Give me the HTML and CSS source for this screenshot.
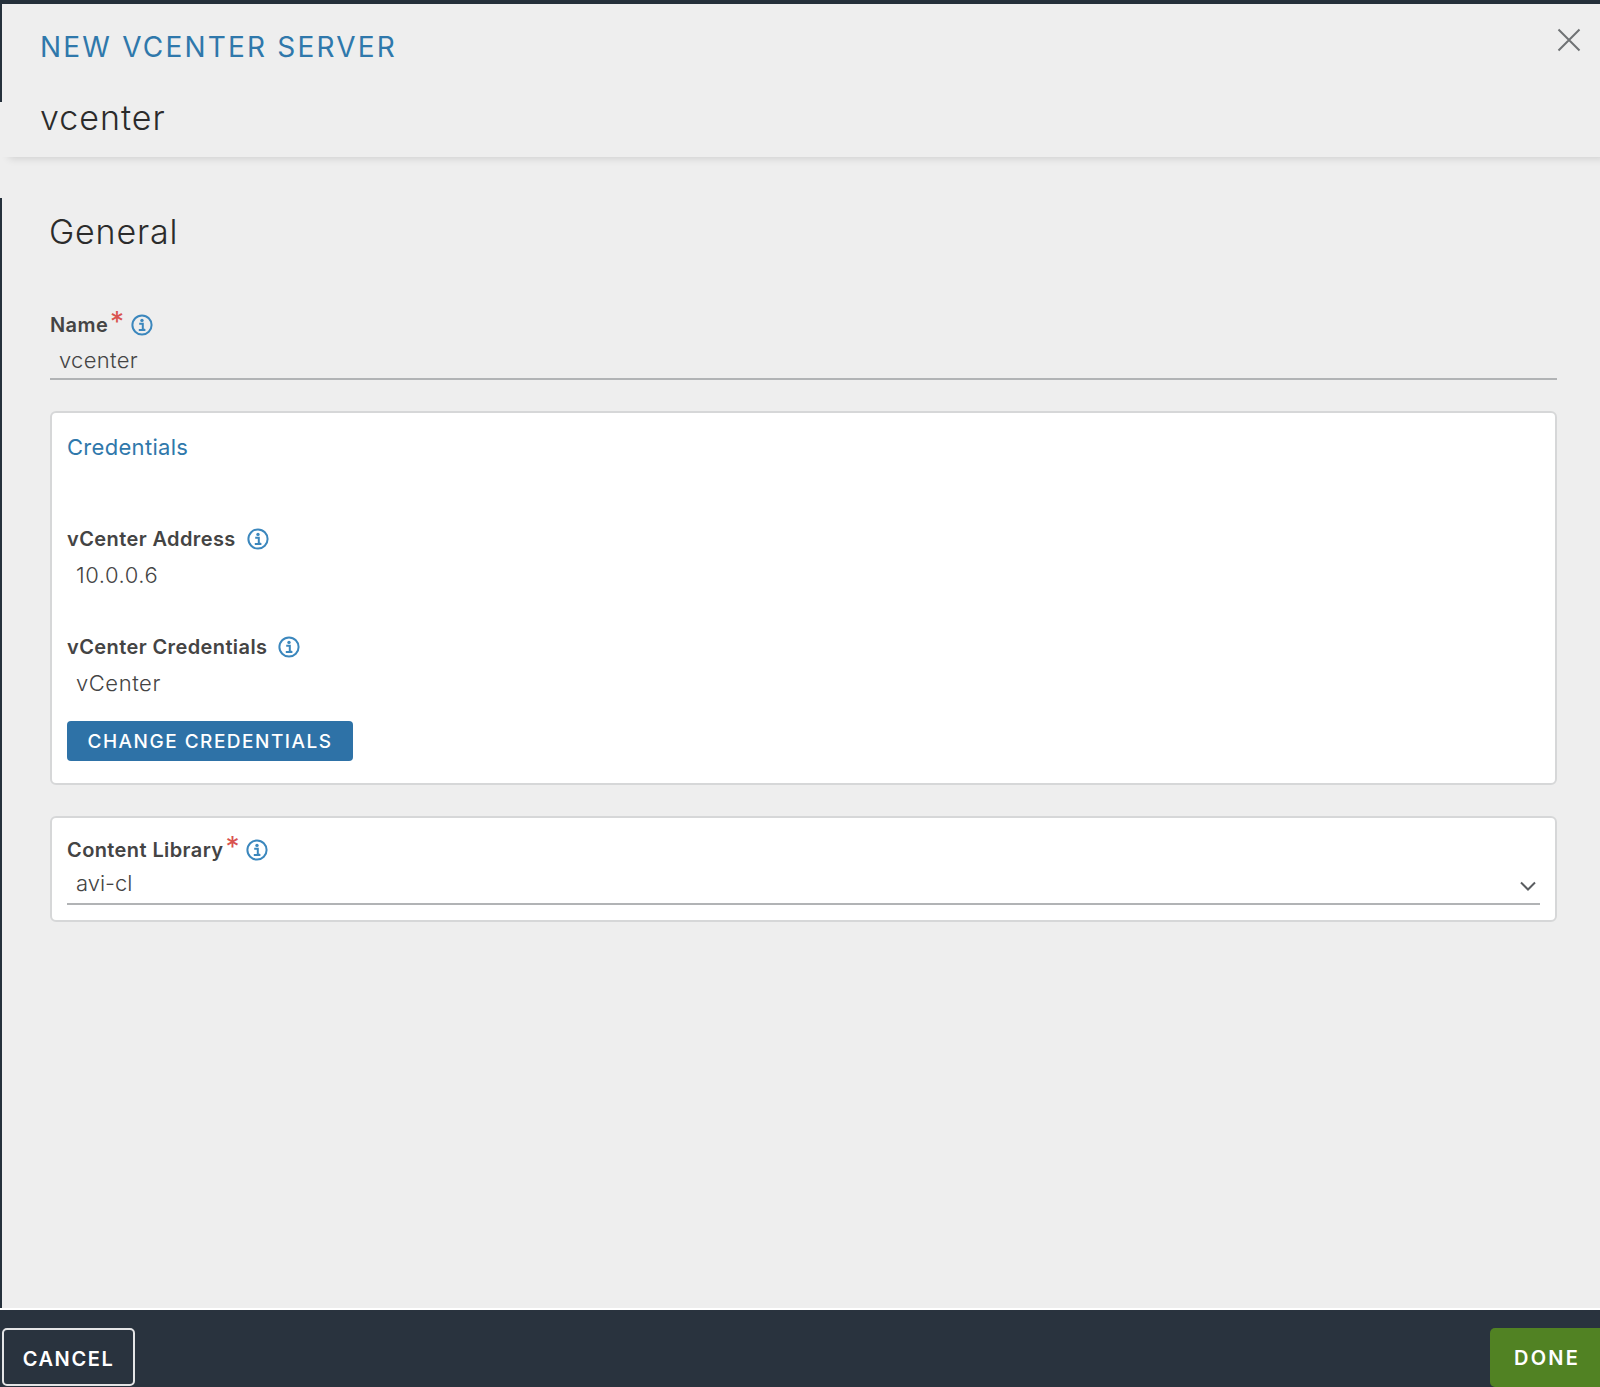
FILE: index.html
```html
<!DOCTYPE html>
<html lang="en">
<head>
<meta charset="utf-8">
<title>New vCenter Server</title>
<link rel="stylesheet" href="styles.css">
</head>
<body>
<div class="topbar"></div>
<header class="header">
  <div class="header-accent"></div>
  <div class="header-text">
    <h1 class="title">NEW VCENTER SERVER</h1>
    <div class="subtitle">vcenter</div>
  </div>
  <button class="close" aria-label="Close">
    <svg width="24" height="24" viewBox="0 0 24 24"><path d="M1.5 1.5 L22.5 22.5 M22.5 1.5 L1.5 22.5" stroke="#6f7274" stroke-width="2" fill="none"/></svg>
  </button>
</header>
<main class="main">
  <h2 class="section">General</h2>
  <div class="field">
    <div class="label">Name<span class="req">*</span>
      <svg class="info" viewBox="0 0 22 22"><circle cx="11" cy="11" r="9.6" fill="none" stroke="#3b87bd" stroke-width="2"/><circle cx="11" cy="6.4" r="1.7" fill="#3b87bd"/><path d="M8.2 9.8h3.6v6h2.2M7.8 15.9h6.6" fill="none" stroke="#3b87bd" stroke-width="2"/></svg>
    </div>
    <div class="input">vcenter</div>
  </div>
  <section class="card card-cred">
    <div class="card-title">Credentials</div>
    <div class="label">vCenter Address
      <svg class="info wide" viewBox="0 0 22 22"><circle cx="11" cy="11" r="9.6" fill="none" stroke="#3b87bd" stroke-width="2"/><circle cx="11" cy="6.4" r="1.7" fill="#3b87bd"/><path d="M8.2 9.8h3.6v6h2.2M7.8 15.9h6.6" fill="none" stroke="#3b87bd" stroke-width="2"/></svg>
    </div>
    <div class="value">10.0.0.6</div>
    <div class="label label-second">vCenter Credentials
      <svg class="info wide" viewBox="0 0 22 22"><circle cx="11" cy="11" r="9.6" fill="none" stroke="#3b87bd" stroke-width="2"/><circle cx="11" cy="6.4" r="1.7" fill="#3b87bd"/><path d="M8.2 9.8h3.6v6h2.2M7.8 15.9h6.6" fill="none" stroke="#3b87bd" stroke-width="2"/></svg>
    </div>
    <div class="value">vCenter</div>
    <button class="btn-primary">CHANGE CREDENTIALS</button>
  </section>
  <section class="card card-lib">
    <div class="label">Content Library<span class="req">*</span>
      <svg class="info" viewBox="0 0 22 22"><circle cx="11" cy="11" r="9.6" fill="none" stroke="#3b87bd" stroke-width="2"/><circle cx="11" cy="6.4" r="1.7" fill="#3b87bd"/><path d="M8.2 9.8h3.6v6h2.2M7.8 15.9h6.6" fill="none" stroke="#3b87bd" stroke-width="2"/></svg>
    </div>
    <div class="select">
      <span>avi-cl</span>
      <svg class="chev" width="16" height="10" viewBox="0 0 16 10"><path d="M1 1.5 L8 8.5 L15 1.5" fill="none" stroke="#5a5d60" stroke-width="2"/></svg>
    </div>
  </section>
</main>
<footer class="footer">
  <button class="btn-cancel">CANCEL</button>
  <button class="btn-done">DONE</button>
</footer>
</body>
</html>
```

FILE: styles.css
```css
* { box-sizing: border-box; }
html, body { height: 100%; }
body {
  margin: 0;
  height: 1387px;
  overflow: hidden;
  display: flex;
  flex-direction: column;
  background: #eeeeee;
  font-family: "Inter", "Liberation Sans", sans-serif;
  color: #333;
}
.topbar { height: 4px; background: #25303b; flex: none; }
.header {
  flex: none;
  height: 153px;
  display: flex;
  justify-content: space-between;
  position: relative;
  background: #eeeeee;
  box-shadow: 7px 3px 8px -2px rgba(0,0,0,.15);
}
.header-accent {
  position: absolute; left: 0; top: 0;
  width: 2px; height: 98px; background: #25303b;
}
.header-text { padding: 27px 0 0 40px; }
.title {
  margin: 0;
  font-size: 28px;
  line-height: 32px;
  font-weight: 400;
  letter-spacing: 2.2px;
  color: #2f78ab;
}
.subtitle {
  margin-top: 38px;
  font-size: 34px;
  line-height: 34px;
  font-weight: 300;
  letter-spacing: 1px;
  color: #2b2b2b;
}
.close {
  background: none; border: 0; padding: 0;
  margin: 24px 19px 0 0;
  width: 24px; height: 24px;
  display: block;
}
.close svg { display: block; }
.main {
  flex: 1;
  min-height: 0;
  margin-top: 41px;
  padding: 14px 43px 0 48px;
  border-left: 2px solid #25303b;
}
.section {
  margin: 0 0 0 -1px;
  font-size: 34px;
  line-height: 40px;
  font-weight: 300;
  letter-spacing: .8px;
  color: #2b2b2b;
}
.field { margin-top: 61px; }
.label {
  display: flex;
  align-items: center;
  height: 24px;
  font-size: 20px;
  font-weight: 600;
  letter-spacing: .4px;
  color: #444;
  white-space: nowrap;
}
.req {
  color: #d9534f;
  font-size: 28px;
  font-weight: 400;
  line-height: 24px;
  margin: 0 6px 0 2px;
  position: relative;
  top: -3px;
  align-self: flex-start;
}
.info { width: 22px; height: 22px; flex: none; }
.info.wide { margin-left: 11px; }
.input {
  margin-top: 8px;
  height: 35px;
  line-height: 30px;
  padding: 0 0 0 9px;
  font-size: 22px;
  font-weight: 300;
  letter-spacing: .3px;
  color: #444;
  border-bottom: 2px solid #b1b3b5;
}
.card {
  background: #fff;
  border: 2px solid #d6d7d8;
  border-radius: 6px;
  padding: 0 15px;
}
.card-cred { margin-top: 31px; height: 374px; }
.card-title {
  margin-top: 20px;
  height: 28px;
  line-height: 28px;
  font-size: 22px;
  font-weight: 400;
  letter-spacing: .3px;
  color: #2f78ab;
  margin-bottom: 66px;
}
.value {
  margin-top: 10px;
  height: 28px;
  line-height: 28px;
  padding-left: 9px;
  font-size: 22px;
  font-weight: 300;
  letter-spacing: .55px;
  color: #444;
}
.label-second { margin-top: 46px; }
.btn-primary {
  display: block;
  margin-top: 24px;
  width: 286px;
  height: 40px;
  padding: 0;
  background: #2e72a7;
  color: #fff;
  border: 0;
  border-radius: 4px;
  font: 500 19px "Inter", "Liberation Sans", sans-serif;
  letter-spacing: 1.5px;
}
.card-lib { margin-top: 31px; height: 106px; padding-top: 20px; }
.select {
  margin-top: 8px;
  height: 35px;
  padding-left: 9px;
  display: flex;
  align-items: flex-start;
  justify-content: space-between;
  font-size: 22px;
  line-height: 26px;
  font-weight: 300;
  color: #444;
  border-bottom: 2px solid #b1b3b5;
}
.chev { margin: 11px 4px 0 0; }
.footer {
  flex: none;
  height: 79px;
  padding: 18px 0 0 2px;
  background: #29333e;
  border-top: 2px solid #fff;
  display: flex;
  justify-content: space-between;
  align-items: flex-start;
}
.btn-cancel, .btn-done {
  font: 600 20px "Inter", "Liberation Sans", sans-serif;
  color: #fff;
}
.btn-cancel {
  width: 133px;
  height: 58px;
  padding: 3px 0 0;
  background: transparent;
  border: 2px solid #e4e5e6;
  border-radius: 5px;
  letter-spacing: 1.6px;
}
.btn-done {
  width: 110px;
  height: 59px;
  padding: 0 0 0 4px;
  background: #518223;
  border: 0;
  border-radius: 5px 0 0 5px;
  letter-spacing: 2.2px;
}
```
